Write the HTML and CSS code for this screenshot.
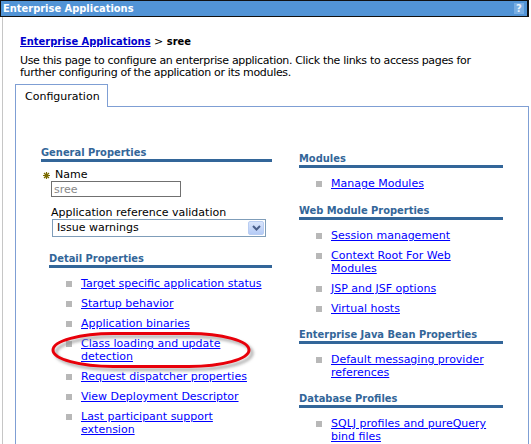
FILE: index.html
```html
<!DOCTYPE html>
<html>
<head>
<meta charset="utf-8">
<title>Enterprise Applications</title>
<link rel="stylesheet" href="styles.css">
</head>
<body>
<div class="titlebar">
  <span class="title">Enterprise Applications</span>
  <span class="help">?</span>
</div>
<div class="content">
  <div class="crumb"><a href="#" class="crumb-link">Enterprise Applications</a> &gt; <b>sree</b></div>
  <p class="desc">Use this page to configure an enterprise application. Click the links to access pages for<br>further configuring of the application or its modules.</p>
  <div class="tabs"><div class="tab">Configuration</div></div>
  <div class="panel">
    <div class="col col-left">
      <div class="section">
        <h3 class="sec-head">General Properties</h3>
        <div class="field">
          <div class="label req"><svg class="star" width="7" height="7" viewBox="0 0 7 7"><path d="M3.5 0V7M0 3.5H7M1 1L6 6M6 1L1 6" stroke="#7a6a00" stroke-width="1.2"/></svg>Name</div>
          <input class="text-input" type="text" value="sree">
        </div>
        <div class="field field-select">
          <div class="label">Application reference validation</div>
          <div class="select"><span class="sel-text">Issue warnings</span><span class="sel-btn"><svg width="9" height="6" viewBox="0 0 9 6"><path d="M1 1L4.5 4.5L8 1" fill="none" stroke="#4a5f8a" stroke-width="2"/></svg></span></div>
        </div>
      </div>
      <div class="section detail">
        <h3 class="sec-head">Detail Properties</h3>
        <ul class="links">
          <li><a href="#">Target specific application status</a></li>
          <li><a href="#">Startup behavior</a></li>
          <li><a href="#">Application binaries</a></li>
          <li><a href="#">Class loading and update<br>detection</a></li>
          <li><a href="#">Request dispatcher properties</a></li>
          <li><a href="#">View Deployment Descriptor</a></li>
          <li><a href="#">Last participant support<br>extension</a></li>
        </ul>
      </div>
      <svg class="annot" width="212" height="46" viewBox="0 0 212 46">
        <defs>
          <filter id="blur" x="-10%" y="-30%" width="120%" height="160%"><feGaussianBlur stdDeviation="1.5"/></filter>
        </defs>
        <rect x="7" y="7.5" width="196" height="33" rx="60" ry="16.5" fill="none" stroke="#8a8a8a" stroke-width="3" opacity="0.7" filter="url(#blur)"/>
        <rect x="4" y="4.5" width="196" height="33" rx="60" ry="16.5" fill="none" stroke="#e8000a" stroke-width="3"/>
      </svg>
    </div>
    <div class="col col-right">
      <div class="section">
        <h3 class="sec-head">Modules</h3>
        <ul class="links">
          <li><a href="#">Manage Modules</a></li>
        </ul>
      </div>
      <div class="section">
        <h3 class="sec-head">Web Module Properties</h3>
        <ul class="links">
          <li><a href="#">Session management</a></li>
          <li><a href="#">Context Root For Web<br>Modules</a></li>
          <li><a href="#">JSP and JSF options</a></li>
          <li><a href="#">Virtual hosts</a></li>
        </ul>
      </div>
      <div class="section">
        <h3 class="sec-head">Enterprise Java Bean Properties</h3>
        <ul class="links">
          <li><a href="#">Default messaging provider<br>references</a></li>
        </ul>
      </div>
      <div class="section">
        <h3 class="sec-head">Database Profiles</h3>
        <ul class="links">
          <li><a href="#">SQLJ profiles and pureQuery<br>bind files</a></li>
        </ul>
      </div>
    </div>
  </div>
</div>
</body>
</html>
```
FILE: styles.css
```css
html, body {
  margin: 0;
  padding: 0;
  background: #ffffff;
}
body {
  font-family: "DejaVu Sans", sans-serif;
  font-size: 11px;
  color: #000;
  overflow: hidden;
}
.title,
.crumb-link,
.crumb b,
.sec-head {
  font-family: "DejaVu Sans Condensed", "DejaVu Sans", sans-serif;
  font-stretch: condensed;
  font-weight: bold;
}
.titlebar {
  box-sizing: border-box;
  width: 529px;
  height: 17px;
  background: #5294d6;
  border: 1px solid #111;
  border-right-width: 2px;
  display: flex;
  align-items: center;
  justify-content: space-between;
  padding: 0 2px 0 2px;
}
.title {
  color: #fff;
  line-height: 13px;
}
.help {
  width: 10px;
  height: 11px;
  margin-right: 1px;
  background: #78ade2;
  color: #e8f1fb;
  font-weight: bold;
  font-size: 10px;
  line-height: 11px;
  text-align: center;
}
.content {
  margin-left: 2px;
  border-left: 1px solid #c6c6c6;
  padding: 18px 0 0 12px;
  min-height: 440px;
}
.crumb {
  padding-left: 5px;
  line-height: 13px;
}
.crumb-link {
  color: #0000cc;
}
.desc {
  margin: 7px 0 0 0;
  padding-left: 5px;
  line-height: 12px;
  letter-spacing: -0.33px;
  white-space: nowrap;
}
.tabs {
  margin-top: 5px;
  display: flex;
}
.tab {
  box-sizing: border-box;
  width: 93px;
  height: 23px;
  border: 1px solid #7f9fd4;
  border-bottom: none;
  background: #fff;
  padding: 5px 0 0 9px;
  line-height: 13px;
  margin-bottom: -1px;
  position: relative;
  z-index: 1;
}
.panel {
  box-sizing: border-box;
  width: 514px;
  border: 1px solid #7f9fd4;
  border-bottom: none;
  min-height: 360px;
  padding: 40px 25px 0 25px;
  display: grid;
  grid-template-columns: 231px 204px;
  column-gap: 27px;
  align-items: start;
}
.col-left { position: relative; }
.col-right { padding-top: 5px; }
.sec-head {
  margin: 0;
  font-size: 11px;
  color: #336699;
  line-height: 12px;
  border-bottom: 3px solid #336699;
}
.col-right .sec-head { line-height: 13px; }
.col-right .links { margin: 9px 0 13px 0; }
.col-right .section:first-child .links { margin-bottom: 14px; }
.field {
  padding-left: 10px;
}
.label {
  line-height: 12px;
}
.req {
  margin-top: 7px;
  margin-left: -8px;
  display: flex;
  align-items: center;
  gap: 5px;
}
.star { flex: none; }
.text-input {
  display: block;
  box-sizing: border-box;
  width: 130px;
  height: 16px;
  margin: 0;
  border: 1px solid #707070;
  padding: 0 2px;
  font: inherit;
  font-size: 11px;
  color: #888;
  background: #fff;
  outline: none;
}
.field-select .label { margin-top: 10px; }
.select {
  box-sizing: border-box;
  width: 214px;
  height: 18px;
  margin-left: 1px;
  border: 1px solid #7f9db9;
  display: flex;
  align-items: center;
  justify-content: space-between;
  padding: 0 1px 0 4px;
  background: #fff;
}
.sel-text { line-height: 14px; }
.sel-btn {
  box-sizing: border-box;
  width: 16px;
  height: 14px;
  border: 1px solid #b9cdf2;
  border-radius: 2px;
  background: linear-gradient(#d9e5fc, #b5cbf6);
  display: flex;
  align-items: center;
  justify-content: center;
}
.detail {
  margin: 15px 0 0 8px;
}
.detail .sec-head { line-height: 13px; }
.links {
  list-style: none;
  margin: 10px 0 14px 0;
  padding: 0;
}
.detail .links { margin-top: 9px; }
.links li {
  display: flex;
  align-items: flex-start;
  padding-left: 17px;
  line-height: 13px;
  margin-bottom: 7px;
}
.links li:last-child { margin-bottom: 0; }
.links li::before {
  content: "";
  flex: none;
  width: 6px;
  height: 6px;
  margin: 4px 9px 0 0;
  background: #b8b8b8;
}
.links a {
  color: #0000ff;
  text-decoration: underline;
}
.annot {
  position: absolute;
  left: 8px;
  top: 182px;
  pointer-events: none;
}
```
